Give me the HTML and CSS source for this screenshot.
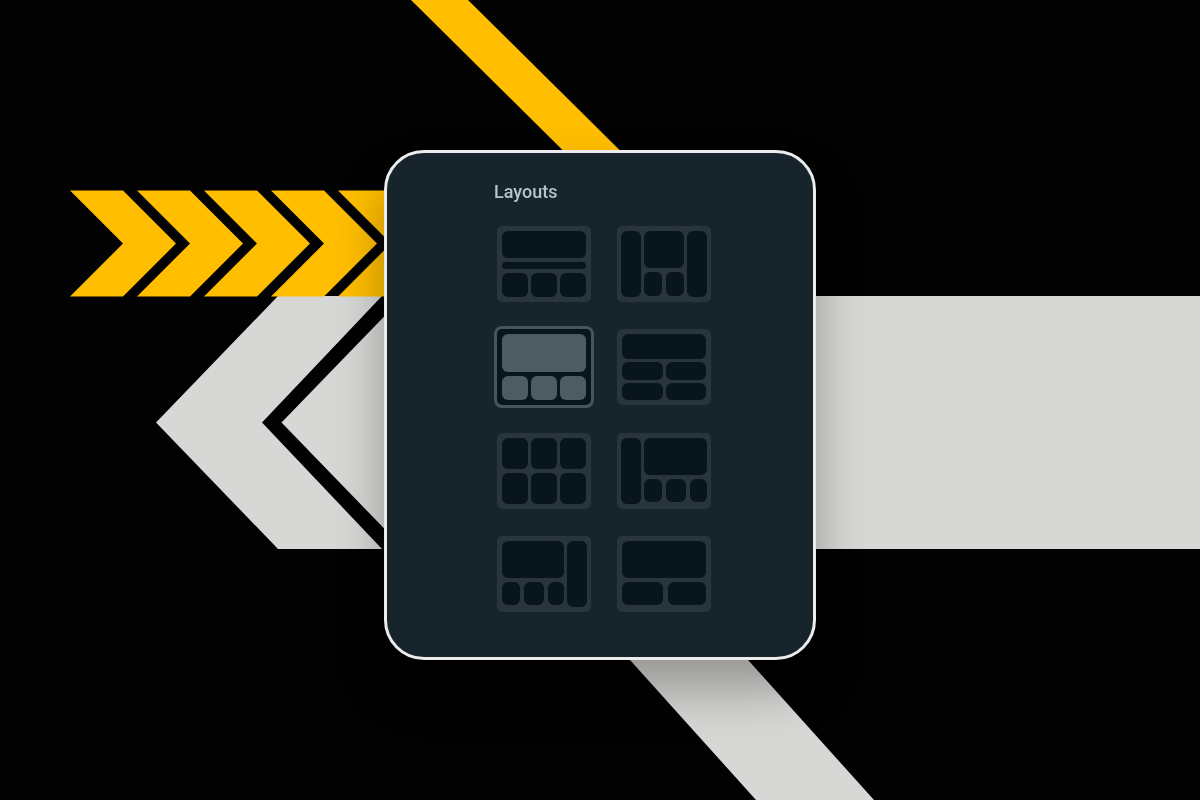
FILE: index.html
```
<!DOCTYPE html>
<html lang="en">
<head>
<meta charset="utf-8">
<meta name="viewport" content="width=device-width, initial-scale=1">
<title>Layouts</title>
<link rel="stylesheet" href="styles.css">
</head>
<body>
<svg class="backdrop" viewBox="0 0 1200 800" preserveAspectRatio="xMidYMid slice" aria-hidden="true">
  <defs>
    <path id="chevron" d="M70 190.5H123L176 243.5L123 296.5H70L123 243.5Z"/>
  </defs>
  <g fill="#d7d7d5">
    <path d="M278 296H382L262 422.5L382 549H278L156 422.5Z"/>
    <path d="M404 296H1200V549H404L281.5 422.5Z"/>
    <path d="M576 600H694L874 800H756Z"/>
  </g>
  <g fill="#ffbe00">
    <path d="M411 0H468L670 200H613Z"/>
    <use href="#chevron"/>
    <use href="#chevron" x="67"/>
    <use href="#chevron" x="134"/>
    <use href="#chevron" x="201"/>
    <use href="#chevron" x="268"/>
  </g>
</svg>
<main class="stage">
  <form class="card">
    <h1 class="title" id="layouts-title">Layouts</h1>
    <div class="options" role="radiogroup" aria-labelledby="layouts-title">
      <label class="option">
        <input class="radio" type="radio" name="layout" aria-label="Banner, strip and three tiles">
        <span class="thumb thumb-strip"><i class="tile full"></i><i class="tile full"></i><i class="tile"></i><i class="tile"></i><i class="tile"></i></span>
      </label>
      <label class="option">
        <input class="radio" type="radio" name="layout" aria-label="Two sidebars">
        <span class="thumb thumb-sidebars"><i class="tile"></i><span class="middle"><i class="tile full"></i><i class="tile"></i><i class="tile"></i></span><i class="tile"></i></span>
      </label>
      <label class="option">
        <input class="radio" type="radio" name="layout" aria-label="Banner and three tiles" checked>
        <span class="thumb thumb-banner"><i class="tile full"></i><i class="tile"></i><i class="tile"></i><i class="tile"></i></span>
      </label>
      <label class="option">
        <input class="radio" type="radio" name="layout" aria-label="Banner and four tiles">
        <span class="thumb thumb-four"><i class="tile full"></i><i class="tile"></i><i class="tile"></i><i class="tile"></i><i class="tile"></i></span>
      </label>
      <label class="option">
        <input class="radio" type="radio" name="layout" aria-label="Six tiles">
        <span class="thumb thumb-six"><i class="tile"></i><i class="tile"></i><i class="tile"></i><i class="tile"></i><i class="tile"></i><i class="tile"></i></span>
      </label>
      <label class="option">
        <input class="radio" type="radio" name="layout" aria-label="Left sidebar">
        <span class="thumb thumb-left"><i class="tile"></i><span class="content"><i class="tile full"></i><i class="tile"></i><i class="tile"></i><i class="tile"></i></span></span>
      </label>
      <label class="option">
        <input class="radio" type="radio" name="layout" aria-label="Right sidebar">
        <span class="thumb thumb-right"><span class="content"><i class="tile full"></i><i class="tile"></i><i class="tile"></i><i class="tile"></i></span><i class="tile"></i></span>
      </label>
      <label class="option">
        <input class="radio" type="radio" name="layout" aria-label="Banner and two tiles">
        <span class="thumb thumb-two"><i class="tile full"></i><i class="tile"></i><i class="tile"></i></span>
      </label>
    </div>
  </form>
</main>
</body>
</html>
```
FILE: styles.css
```
* {
  box-sizing: border-box;
}

body {
  margin: 0;
  background: #020202;
  font-family: Roboto, "Liberation Sans", sans-serif;
}

.backdrop {
  position: fixed;
  inset: 0;
  width: 100%;
  height: 100%;
}

.stage {
  position: relative;
  display: flex;
  align-items: center;
  justify-content: center;
  min-height: 100vh;
  padding-top: 10px;
}

.card {
  display: flex;
  flex-direction: column;
  padding: 27px 102px 45px 107px;
  border: 3px solid #ececec;
  border-radius: 40px;
  background: #18242c;
  box-shadow: 0 30px 50px rgba(0, 0, 0, 0.3);
}

.title {
  margin: 0 0 22px;
  color: #b4c3cc;
  font-size: 18px;
  font-weight: 500;
  line-height: 24px;
}

.options {
  display: grid;
  grid-template-columns: 94px 94px;
  align-content: space-between;
  column-gap: 26px;
  min-height: 386px;
  padding-left: 3px;
}

.option {
  position: relative;
  cursor: pointer;
}

.radio {
  position: absolute;
  inset: 0;
  width: 100%;
  height: 100%;
  margin: 0;
  opacity: 0;
}

.thumb {
  display: grid;
  gap: 4px 3px;
  height: 76px;
  padding: 5px;
  border-radius: 5px;
  background: #28353c;
}

.tile {
  border-radius: 6px;
  background: #08151a;
}

.full {
  grid-column: 1 / -1;
}

.radio:checked + .thumb {
  background: #08151a;
  outline: 3px solid #46545b;
}

.radio:checked + .thumb .tile {
  background: #4d5c63;
}

.radio:focus-visible + .thumb {
  outline: 3px solid #b4c3cc;
}

.thumb-strip,
.thumb-banner,
.thumb-six {
  grid-template-columns: repeat(3, 1fr);
}

.thumb-strip {
  grid-template-rows: 27px 7px 24px;
}

.thumb-banner {
  grid-template-rows: 38px 24px;
}

.thumb-six {
  grid-template-rows: 1fr 1fr;
}

.thumb-four {
  grid-template: 25px 18px 17px / 1fr 1fr;
  row-gap: 3px;
}

.thumb-two {
  grid-template: 37px 23px / 41px 38px;
  column-gap: 5px;
}

.thumb-sidebars {
  grid-template-columns: 20px 1fr 20px;
  padding: 5px 4px;
}

.thumb-left {
  grid-template-columns: 20px 1fr;
  padding: 5px 4px;
}

.thumb-right {
  grid-template-columns: 1fr 20px;
  padding: 5px 4px 5px 5px;
}

.middle,
.content {
  display: grid;
  gap: 4px;
}

.middle {
  grid-template: 37px 24px / 1fr 1fr;
}

.content {
  grid-template: 37px 23px / 18px 20px 1fr;
}
```
